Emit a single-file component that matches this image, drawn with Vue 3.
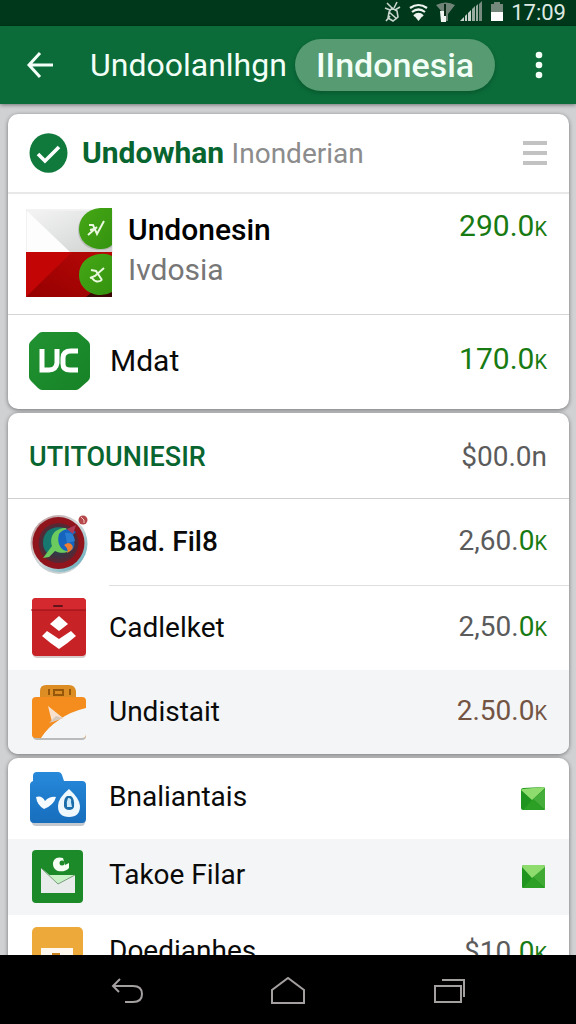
<script setup>
const appName = 'Undoolanlhgn'
</script>

<template>
  <div class="screen">
    <div class="status">
      <svg class="status-icons" width="122" height="24" viewBox="0 0 122 24" aria-hidden="true">
        <g fill="none" stroke="#c8d6cd" stroke-width="1.6">
          <path d="M3 2l5 5M13 1l-3 6M1 7l5 2M16 6l-5 3" />
          <path d="M8 7l5 3 1 6-5 4-5-3 1-6zM5 11l8 7M2 20l4-5" />
        </g>
        <g fill="none" stroke="#eef4f0" stroke-width="2.2">
          <path d="M26 7q8.500-6 17 0M28 11q6.500-5 13 0M30 15q4.500-4 9 0" />
        </g>
        <path d="M30.500 15q4-3 8 0l-4 5z" fill="#eef4f0" />
        <path d="M52 4q10-5 19 0l-7 9v7h-5v-8z" fill="#6f8477" />
        <path d="M56 10h6v11h-5z" fill="#f2f6f3" />
        <path d="M61 3v12" stroke="#0a2917" stroke-width="2" />
        <g fill="#c9d2cc">
          <path d="M76 20l4-4v4zM81 15l2-2v7h-2zM84 12l3-3v11h-3z" />
          <path d="M88 8l3-3v15h-3zM92 5l2-2v17h-2z" fill="#9baca1" />
          <path d="M95 3l3-3v20h-3z" fill="#778c7f" />
        </g>
        <path d="M110 1h6v2h3v8h-12V3h3z" fill="#74877b" />
        <path d="M107 11h12v9h-12z" fill="#fff" />
      </svg>
      <span class="clock">17:09</span>
    </div>

    <header class="appbar">
      <button class="icon-btn back" aria-label="Back">
        <svg width="28" height="28" viewBox="0 0 28 28" fill="none" stroke="#f4fff8" stroke-width="3">
          <path d="M14 2L3 14l11 12M3 14h24" />
        </svg>
      </button>
      <h1>{{ appName }}</h1>
      <button class="pill">IIndonesia</button>
      <button class="icon-btn more" aria-label="More options">
        <svg width="8" height="28" viewBox="0 0 8 28" fill="#f4fff8">
          <circle cx="4" cy="4" r="3.300" /><circle cx="4" cy="14" r="3.300" /><circle cx="4" cy="24" r="3.300" />
        </svg>
      </button>
    </header>

    <main class="content">
      <section class="card">
        <div class="row head">
          <svg class="check" width="39" height="40" viewBox="0 0 39 40" aria-hidden="true">
            <ellipse cx="19.500" cy="20" rx="19" ry="19.700" fill="#0f7a3c" />
            <path d="M9 21l7 7 14-14" fill="none" stroke="#fff" stroke-width="3.600" />
          </svg>
          <h2 class="lead">Undowhan <span>Inonderian</span></h2>
          <button class="icon-btn" aria-label="List options">
            <svg width="24" height="26" viewBox="0 0 24 26" fill="#c2c2c2">
              <path d="M0 1h24v4H0zM0 11h24v4H0zM0 21h24v4H0z" />
            </svg>
          </button>
        </div>
        <div class="row flag-row">
          <svg width="87" height="89" viewBox="0 0 87 89" aria-hidden="true">
            <defs>
              <linearGradient id="silver" x1="0" y1="0" x2="1" y2="1">
                <stop offset="0" stop-color="#f4f4f4" /><stop offset="1" stop-color="#cfd1d1" />
              </linearGradient>
              <linearGradient id="crimson" x1="0" y1="1" x2="1" y2="0">
                <stop offset="0" stop-color="#950000" /><stop offset="1" stop-color="#b80808" />
              </linearGradient>
              <linearGradient id="lime" x1="0" y1="0" x2="1" y2="1">
                <stop offset="0" stop-color="#45a716" /><stop offset="1" stop-color="#35930f" />
              </linearGradient>
              <clipPath id="flagClip"><path d="M0 0h87v89H0z" /></clipPath>
            </defs>
            <path d="M0 2h86v43H0z" fill="#fdfdfd" stroke="#e6e6e6" />
            <path d="M1 3h85v41H44z" fill="url(#silver)" />
            <path d="M0 44h86v45H0z" fill="#c30505" />
            <path d="M46 44h40v45H0z" fill="url(#crimson)" />
            <path d="M66 84q12 5 20-2v7H60z" fill="#3b0705" />
            <g clip-path="url(#flagClip)">
              <path d="M86 1H74Q52 5 52 22c0 14 12 21 24 20q6 0 10-3z" fill="#8b9488" opacity=".4" />
              <path d="M86 0H74C61 1 53 10 53 21c0 13 11 20 22 20q7 0 11-4z" fill="url(#lime)" />
              <path d="M86 48q-6-3-12-2C61 47 53 56 53 67c0 12 10 20 22 20q6 0 11-3z" fill="url(#lime)" />
              <g fill="none" stroke="#e9f8df" stroke-width="2">
                <path d="M63 17h4l4 9 7-13M62 27l9-8M64 22l4-1" />
                <path d="M65 62l5 1 6 9M78 60l-9 8-5 2M66 70q4 6 10 2" />
              </g>
            </g>
          </svg>
          <div class="names">
            <h3>Undonesin</h3>
            <p>Ivdosia</p>
          </div>
          <span class="amount green top">290.0<small>K</small></span>
        </div>
        <div class="row uc-row">
          <svg width="62" height="60" viewBox="0 0 62 60" aria-hidden="true">
            <defs>
              <linearGradient id="ucGreen" x1="0" y1="0" x2="1" y2="1">
                <stop offset="0" stop-color="#219232" /><stop offset="1" stop-color="#168326" />
              </linearGradient>
            </defs>
            <path d="M14 1h34q2 0 4 2l8 7q2 2 2 4v32q0 2-2 4l-8 7q-2 2-4 2H14q-2 0-4-2l-7-7q-2-2-2-4V14q0-2 2-4l7-7q2-2 4-2z" fill="url(#ucGreen)" />
            <path d="M14 18v21h7q7 0 8-7V18M50 20h-7q-8 0-8 7v6q0 6 7 6h8" fill="none" stroke="#fff" stroke-width="5" />
          </svg>
          <span class="name">Mdat</span>
          <span class="amount green">170.0<small>K</small></span>
        </div>
      </section>

      <section class="card">
        <div class="row group-head">
          <h2 class="group">UTITOUNIESIR</h2>
          <span class="amount">$00.0n</span>
        </div>
        <div class="row inset">
          <svg class="ico" width="60" height="62" viewBox="0 0 60 62" aria-hidden="true">
            <defs>
              <linearGradient id="ring" x1="0" y1="0" x2="1" y2="1">
                <stop offset="0" stop-color="#b58d8d" /><stop offset=".5" stop-color="#d7dcde" /><stop offset="1" stop-color="#4aa5b5" />
              </linearGradient>
              <radialGradient id="lens">
                <stop offset="0" stop-color="#16505c" /><stop offset=".65" stop-color="#3a3442" /><stop offset="1" stop-color="#5e2530" />
              </radialGradient>
            </defs>
            <ellipse cx="31" cy="34" rx="27" ry="28" fill="#c9d0d2" />
            <circle cx="31" cy="31.500" r="28.500" fill="url(#ring)" />
            <circle cx="30.500" cy="31" r="26" fill="#8f141c" />
            <circle cx="30.500" cy="31" r="20" fill="url(#lens)" />
            <path d="M37 16c-14-3-22 4-22 15q0 6 5 11l8-7z" fill="#17786f" />
            <path d="M38 16c-11 0-17 8-14 18l-9 12 6-1 6-6c8 4 17 1 18-5-9 3-15-7-5-14z" fill="#6bcb5e" />
            <path d="M31 22c4-6 12-6 17-2l-5 5c3 1 5 7 2 12-6 6-18-1-14-15z" fill="#1764be" />
            <path d="M37 21q9-2 10 8l-8 2z" fill="#2a7ed2" />
            <path d="M36 33q5-4 8 0t-5 8q2-4-3-8z" fill="#ee7c31" />
            <path d="M39 17l9-4-3 9z" fill="#ae3b56" />
            <circle cx="55" cy="8" r="4.500" fill="#b5484a" /><path d="M53 5l3 3v3" fill="none" stroke="#f5c4c0" />
          </svg>
          <div class="body">
            <span class="name strong">Bad. Fil8</span>
            <span class="amount">2,60.<b>0<small>K</small></b></span>
          </div>
        </div>
        <div class="row">
          <svg class="ico" width="60" height="60" viewBox="0 0 60 60" aria-hidden="true">
            <rect x="5" y="3" width="53" height="57" rx="4" fill="#d9caca" />
            <rect x="4" y="0" width="54" height="58" rx="4" fill="#c72327" />
            <path d="M4 12V4q0-4 4-4h46q4 0 4 4v8z" fill="#d3292f" />
            <path d="M3 12h55" stroke="#941117" />
            <rect x="25" y="7" width="10" height="2" rx="1" fill="#60151a" />
            <path d="M31 18l9 8-9 7-9-7zM19 33l12 8 12-8 5 5q-8 7-17 13-9-6-17-13z" fill="#fff" />
          </svg>
          <div class="body">
            <span class="name">Cadlelket</span>
            <span class="amount">2,50.<b>0<small>K</small></b></span>
          </div>
        </div>
        <div class="row shaded">
          <svg class="ico" width="60" height="58" viewBox="0 0 60 58" aria-hidden="true">
            <path d="M12 20V8q0-6 6-6h23q6 0 7 6v12z" fill="#dc8d24" />
            <path d="M21 6v6M26 7h9v5h-9zM42 6v6" fill="none" stroke="#96570b" stroke-width="2" />
            <rect x="5" y="18" width="53" height="39" rx="4" fill="#bababa" />
            <path d="M4 18q0-4 4-4h46q4 0 4 4v34q0 3-4 3H8q-4 0-4-3z" fill="#f48d1d" />
            <path d="M58 25q-17 4-27 12-11 7-18 18h41q4 0 4-4z" fill="#f4f5f6" />
            <path d="M20 23l15 12-11 4z" fill="#f8e2cf" />
            <path d="M35 35l-14 5 7-7z" fill="#d8c7bb" />
          </svg>
          <div class="body">
            <span class="name">Undistait</span>
            <span class="amount brown">2.50.0<small>K</small></span>
          </div>
        </div>
      </section>

      <section class="card last">
        <div class="row">
          <svg class="ico" width="60" height="56" viewBox="0 0 60 56" aria-hidden="true">
            <defs>
              <linearGradient id="folder" x1="0" y1="0" x2="0" y2="1">
                <stop offset="0" stop-color="#2789db" /><stop offset="1" stop-color="#176ebc" />
              </linearGradient>
            </defs>
            <rect x="4" y="14" width="53" height="41" rx="4" fill="#c3c9ce" />
            <path d="M5 5q0-4 4-4h21q3 0 4 3l2 6h18q4 0 4 4v34q0 4-4 4H6q-4 0-4-4V14q0-3 3-4z" fill="url(#folder)" />
            <path d="M8 26q6-2 9 4 5-5 11-4-2 8-12 12Q9 34 8 26z" fill="#f5fbff" />
            <path d="M41 18q11 10 11 17 0 11-11 11T30 35q0-8 11-17z" fill="#eef8fd" />
            <path d="M39 25h4q4 3 3 11-1 3-5 3-6 0-5-7 0-5 3-7z" fill="#1b6da9" />
            <path d="M40 27q4 0 3 4l1 5h-5q-1-5 1-9z" fill="#cceafa" />
          </svg>
          <div class="body">
            <span class="name">Bnaliantais</span>
            <svg class="mail" width="24" height="24" viewBox="0 0 24 24" aria-hidden="true">
              <path d="M0 2l2-1 20-1q2 0 2 2v20q0 1-1 1H2q-2 0-2-2z" fill="#1f951f" />
              <path d="M24 2v21L12 12z" fill="#45ad39" /><path d="M12 12l11 11H2z" fill="#2ba025" />
              <path d="M0 3q0-1 2-1l20-2q2 0 1 2L11 13z" fill="#8edb6e" />
            </svg>
          </div>
        </div>
        <div class="row shaded">
          <svg class="ico" width="60" height="54" viewBox="0 0 60 54" aria-hidden="true">
            <rect x="4" y="0" width="51" height="53" rx="4" fill="#1c8a28" />
            <path d="M13 18l17 14 17-7v18H13z" fill="#e8edeb" />
            <path d="M13 18l6 7h28l-17 9z" fill="#c9f1c6" />
            <path d="M13 18l17 16 17-9" fill="none" stroke="#7b9d7f" />
            <path d="M35 8c-7-2-10 2-10 6 0 9 12 9 16 4V13l-4 2z" fill="#f6fff4" />
            <circle cx="34" cy="13" r="2.500" fill="#1c8a28" />
          </svg>
          <div class="body">
            <span class="name">Takoe Filar</span>
            <svg class="mail" width="24" height="24" viewBox="0 0 24 24" aria-hidden="true">
              <path d="M1 2q0-2 2-2h19q2 0 2 2v20q0 1-1 1H2q-1 0-1-1z" fill="#1f951f" />
              <path d="M24 2v21L12 12z" fill="#3fa934" /><path d="M12 12l11 11H2z" fill="#2ba025" />
              <path d="M1 2q0-2 2-2h19q2 0 2 2L11 13z" fill="#8edb6e" />
            </svg>
          </div>
        </div>
        <div class="row">
          <svg class="ico" width="60" height="52" viewBox="0 0 60 52" aria-hidden="true">
            <rect x="4" y="0" width="51" height="52" rx="5" fill="#eda93a" />
            <path d="M13 21h32v22H13z" fill="#fff8ee" /><path d="M24 26h8v7h-8z" fill="#c88220" />
          </svg>
          <div class="body">
            <span class="name">Doedianhes</span>
            <span class="amount">$10.<b>0<small>K</small></b></span>
          </div>
        </div>
      </section>
    </main>

    <nav class="navbar" aria-label="System">
      <button class="icon-btn" aria-label="Back">
        <svg width="34" height="28" viewBox="0 0 34 28" fill="none" stroke="#a5a0a0" stroke-width="2">
          <path d="M10 2L3 9l6 6M3 9h20q9 0 9 8t-9 8h-8" />
        </svg>
      </button>
      <button class="icon-btn" aria-label="Home">
        <svg width="36" height="28" viewBox="0 0 36 28" fill="none" stroke="#a5a0a0" stroke-width="2">
          <path d="M2 26V13L18 1l16 12v13z" />
        </svg>
      </button>
      <button class="icon-btn" aria-label="Recent apps">
        <svg width="34" height="26" viewBox="0 0 34 26" fill="none" stroke="#a5a0a0" stroke-width="2">
          <path d="M3 8h26v16H3zM10 2h22v17" />
        </svg>
      </button>
    </nav>
  </div>
</template>

<style>
html, body { height: 100%; }
body { margin: 0; }
</style>

<style scoped>
* { box-sizing: border-box; }
.screen {
  height: 100vh;
  display: flex;
  flex-direction: column;
  overflow: hidden;
  background: #d0d1d3;
  font-family: Roboto, "Liberation Sans", sans-serif;
  color: #0a0a0a;
}
h1, h2, h3, p { margin: 0; }
svg { display: block; flex: none; }
button { margin: 0; border: 0; font: inherit; color: inherit; cursor: pointer; }
.icon-btn { padding: 0; background: none; display: flex; }
.status {
  flex: none;
  height: 26px;
  padding-right: 10px;
  display: flex;
  justify-content: flex-end;
  align-items: center;
  gap: 5px;
  background: #00381b;
}
.clock { font-size: 22px; line-height: 24px; color: #dfeae3; }
.appbar {
  flex: none;
  height: 78px;
  padding: 0 33px 0 26px;
  display: flex;
  align-items: center;
  background: #0b6c3a;
  color: #f2fff7;
  box-shadow: 0 1px 4px rgba(0, 0, 0, .45);
  z-index: 1;
}
.appbar h1 { margin-left: 36px; font-size: 32px; line-height: 40px; font-weight: 400; }
.pill {
  margin-left: 8px;
  height: 52px;
  padding: 0 21px;
  border-radius: 26px;
  background: #569b71;
  font-size: 34px;
  font-weight: 500;
  white-space: nowrap;
  box-shadow: 0 2px 4px rgba(0, 40, 15, .3);
}
.more { margin-left: auto; }
.content {
  flex: 1;
  min-height: 0;
  overflow: hidden;
  padding: 10px 7px 0 8px;
  display: flex;
  flex-direction: column;
  gap: 4px;
}
.card {
  flex: none;
  overflow: hidden;
  border-radius: 10px;
  background: #fff;
  box-shadow: 0 1px 4px rgba(0, 0, 0, .45);
}
.row { height: 84px; padding: 0 22px 0 20px; display: flex; align-items: center; }
.last .row { height: 76px; }
.last .row:first-child { height: 81px; }
.last .name { padding-bottom: 4px; }
.shaded { background: #f4f5f6; }
.head { height: 80px; border-bottom: 2px solid #e8e8e8; }
.lead { margin-left: 14px; flex: 1; font-size: 30px; line-height: 36px; font-weight: 700; color: #08652f; }
.lead span { font-size: 28px; font-weight: 400; color: #8c8c8c; }
.flag-row { height: 121px; padding-left: 18px; padding-bottom: 4px; border-bottom: 1px solid #d5d5d5; }
.names { margin-left: 15px; padding-bottom: 4px; flex: 1; }
.names h3 { font-size: 30px; line-height: 40px; font-weight: 500; color: #000; }
.names p { font-size: 30px; line-height: 40px; color: #777; }
.top { align-self: flex-start; margin-top: 12px; }
.uc-row { height: 94px; padding-bottom: 3px; }
.uc-row .name { margin-left: 20px; flex: 1; font-size: 30px; }
.group-head { height: 86px; padding-top: 2px; border-bottom: 1px solid #d0d0d0; }
.group { flex: 1; font-size: 27px; line-height: 36px; font-weight: 500; color: #08652f; }
.head, .group-head { padding-left: 21px; }
.ico { margin-right: 21px; }
.body { flex: 1; align-self: stretch; display: flex; align-items: center; justify-content: space-between; }
.inset { height: 87px; padding-right: 0; }
.inset .body { padding-right: 22px; border-bottom: 1px solid #dedede; }
.name { font-size: 28px; line-height: 40px; }
.strong { font-weight: 500; }
.amount { font-size: 28px; line-height: 40px; color: #5b5b5b; white-space: nowrap; }
.amount small { font-size: 20px; }
.amount b { font-weight: 400; color: #187a12; }
.green { font-size: 30px; color: #187a12; }
.brown { color: #735443; }
.mail { margin-right: 2px; }
.navbar {
  flex: none;
  height: 69px;
  padding: 2px 110px 0;
  display: flex;
  align-items: center;
  justify-content: space-between;
  background: #000;
}
</style>
